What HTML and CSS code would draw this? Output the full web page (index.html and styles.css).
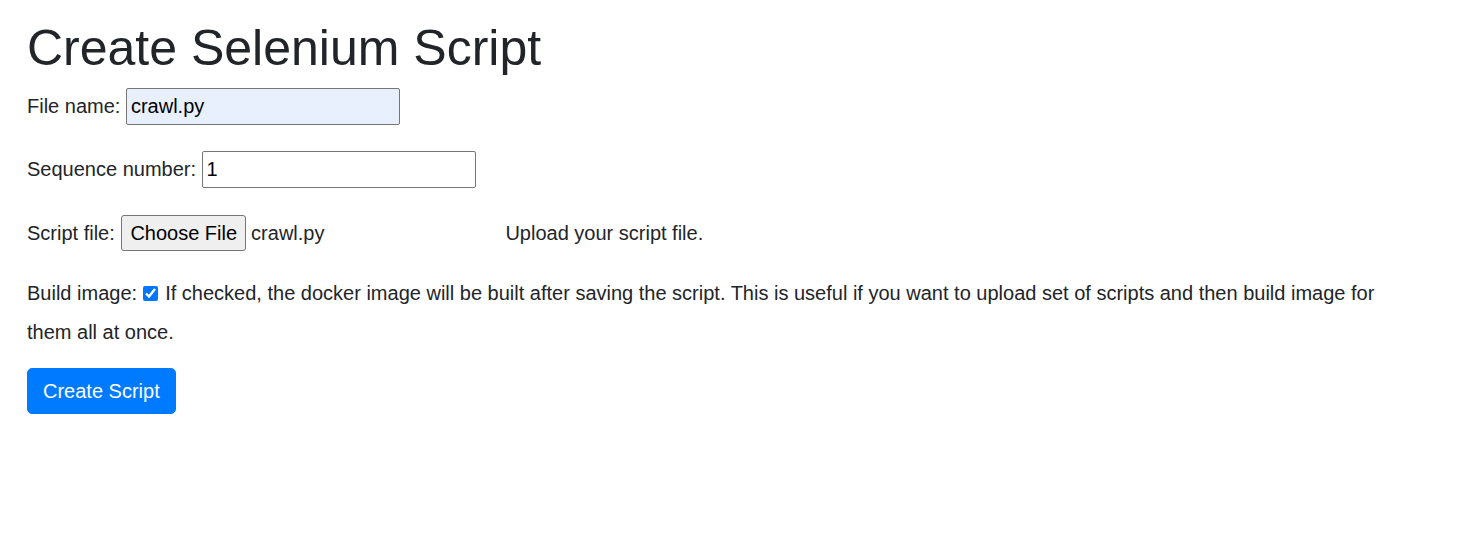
FILE: index.html
```html
<!DOCTYPE html>
<html lang="en">
<head>
<meta charset="utf-8">
<title>Create Selenium Script</title>
<link rel="stylesheet" href="styles.css">
</head>
<body>
<main class="page">
  <h1 class="title">Create Selenium Script</h1>
  <form class="form">
    <p class="row row-name"><label for="f-name">File name:</label> <input id="f-name" class="text-input autofilled" type="text" value="crawl.py"></p>
    <p class="row row-seq"><label for="f-seq">Sequence number:</label> <input id="f-seq" class="text-input" type="text" value="1"></p>
    <p class="row row-file"><label>Script file:</label> <span class="file-input"><span class="file-btn">Choose File</span><span class="file-name">crawl.py</span></span><span class="helptext">Upload your script file.</span></p>
    <p class="row row-build"><label for="f-build">Build image:</label> <input id="f-build" class="check" type="checkbox" checked> <span class="helptext">If checked, the docker image will be built after saving the script. This is useful if you want to upload set of scripts and then build image for them all at once.</span></p>
    <button type="button" class="btn-primary">Create Script</button>
  </form>
</main>
</body>
</html>
```
FILE: styles.css
```css
html, body {
  margin: 0;
  padding: 0;
  background: #ffffff;
}
body {
  font-family: "Liberation Sans", Arial, sans-serif;
  font-size: 20px;
  line-height: 30px;
  color: #212529;
}
.page {
  padding: 18px 27px 0 27px;
}
.title {
  margin: 0;
  font-size: 50px;
  line-height: 60px;
  font-weight: 500;
}
.form {
  margin: 0;
}
.row {
  margin: 0;
}
.row-name {
  margin-top: 10px;
  height: 37px;
}
.row-seq {
  margin-top: 26px;
  height: 37px;
}
.row-file {
  margin-top: 27px;
  height: 37px;
}
.row-build {
  margin-top: 22px;
  max-width: 1390px;
  line-height: 39px;
}
.text-input {
  box-sizing: border-box;
  width: 274px;
  height: 37px;
  margin: 0;
  padding: 1px 4px;
  border: 1px solid #767676;
  border-radius: 2px;
  font-family: "Liberation Sans", Arial, sans-serif;
  font-size: 20px;
  color: #000000;
  background: #ffffff;
  vertical-align: baseline;
}
.autofilled {
  background: #e8f0fe;
}
.file-input {
  display: inline-block;
  width: 384px;
  margin-left: 1px;
  white-space: nowrap;
}
.file-btn {
  display: inline-block;
  box-sizing: border-box;
  height: 36px;
  line-height: 34px;
  padding: 0 8px;
  border: 1px solid #767676;
  border-radius: 3px;
  background: #efefef;
  color: #000000;
}
.file-name {
  margin-left: 5px;
}
.check {
  width: 15px;
  height: 15px;
  margin: 0 2px 0 0;
  accent-color: #0075ff;
  vertical-align: -1px;
}
.btn-primary {
  display: block;
  box-sizing: border-box;
  margin-top: 16px;
  height: 46px;
  padding: 0 15px;
  border: 1px solid #007bff;
  border-radius: 5px;
  background: #007bff;
  color: #ffffff;
  font-family: "Liberation Sans", Arial, sans-serif;
  font-size: 20px;
  line-height: 44px;
}
```
